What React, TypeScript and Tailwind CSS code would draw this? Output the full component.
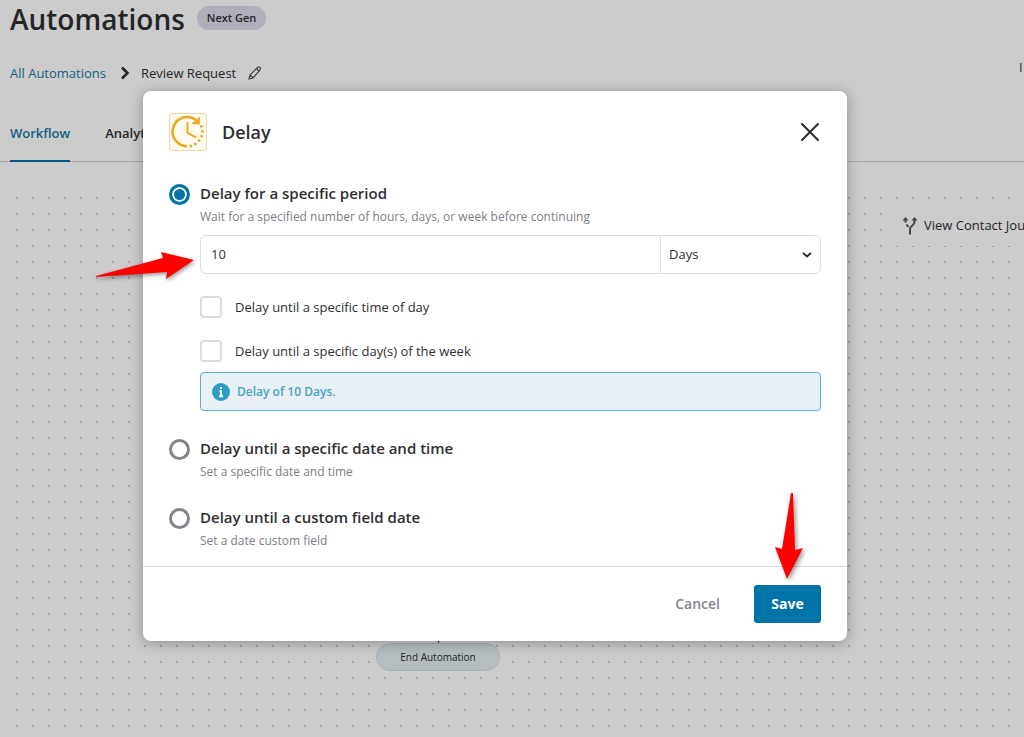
import { useState } from "react";

type Mode = "period" | "datetime" | "custom";

const options: { id: Mode; title: string; description: string }[] = [
  {
    id: "period",
    title: "Delay for a specific period",
    description: "Wait for a specified number of hours, days, or week before continuing",
  },
  {
    id: "datetime",
    title: "Delay until a specific date and time",
    description: "Set a specific date and time",
  },
  {
    id: "custom",
    title: "Delay until a custom field date",
    description: "Set a date custom field",
  },
];

const checks = [
  { id: "time-of-day", label: "Delay until a specific time of day" },
  { id: "day-of-week", label: "Delay until a specific day(s) of the week" },
];

function DelayIcon() {
  return (
    <svg viewBox="0 0 38 38" className="size-[38px]" fill="none" stroke="#e6ab24" aria-hidden="true">
      <rect x="0.5" y="0.5" width="37" height="37" rx="2.5" fill="#fffaf0" stroke="#f0d9a8" />
      <path d="M17 33.2A14.6 14.6 0 1 1 27 7" strokeWidth="2.6" strokeLinecap="round" />
      <path d="M30.300 4.500v6.500l-7-.5z" fill="#e6ab24" strokeWidth="1" strokeLinejoin="round" />
      <path d="M18.400 10v9.600l8 4.600" strokeWidth="2" strokeLinecap="round" strokeLinejoin="round" />
      <path
        d="M32.4 13.4v.01M33.4 18.4v.01M32.6 23.2v.01M30 27.6v.01M26.4 31v.01M21.8 33v.01"
        strokeWidth="2.800"
        strokeLinecap="round"
      />
    </svg>
  );
}

function JourneyIcon() {
  return (
    <svg viewBox="0 0 16 20" className="h-5 w-4 shrink-0" fill="none" stroke="#555" aria-hidden="true">
      <path d="M8 18.5V13c0-3 4.5-3.500 4.500-7V4" strokeWidth="2" />
      <path d="M3.500 4v2.500M4.500 8.500l2 2.500" strokeWidth="2" />
      <path d="M3.500 1 6.500 4.500h-6zM12.500 1l3 3.500h-6z" fill="#555" stroke="none" />
    </svg>
  );
}

function DelayDialog() {
  const [mode, setMode] = useState<Mode>("period");
  const [amount, setAmount] = useState("10");
  const [unit, setUnit] = useState("Days");

  return (
    <div
      role="dialog"
      aria-labelledby="dialog-title"
      className="relative w-full max-w-[704px] rounded-lg bg-white shadow-[0_2px_14px_rgba(0,0,0,0.3)]"
    >
      <header className="flex items-center gap-[15px] px-[26px] pt-[22px]">
        <DelayIcon />
        <h2 id="dialog-title" className="text-lg font-semibold">
          Delay
        </h2>
        <button type="button" aria-label="Close" className="ml-auto">
          <svg viewBox="0 0 22 22" className="size-[22px]" stroke="#2b2b2b" strokeWidth="2" strokeLinecap="round">
            <path d="M3 3l16 16M19 3L3 19" />
          </svg>
        </button>
      </header>

      <div className="flex flex-col gap-[21px] px-[26px] pt-[30px] pb-[13px]">
        {options.map((o) => (
          <div key={o.id} className="flex gap-[10px]">
            <input
              type="radio"
              id={o.id}
              name="mode"
              checked={mode === o.id}
              onChange={() => setMode(o.id)}
              className="mt-[3px] size-[21px] shrink-0 appearance-none rounded-full border-[3px] border-[#85858d] checked:border-[#0073a8] checked:bg-[#0073a8] checked:shadow-[inset_0_0_0_2px_#fff]"
            />
            <div className="min-w-0 grow">
              <label htmlFor={o.id} className="block text-[15px] leading-6 font-semibold">
                {o.title}
              </label>
              <p className="text-xs leading-6 text-[#7e7e87]">{o.description}</p>

              {o.id === "period" && (
                <div className="mb-1">
                  <div className="mt-[6px] flex h-[39px] rounded-md border border-[#dedee6] text-[13px]">
                    <input
                      aria-label="Delay amount"
                      value={amount}
                      onChange={(e) => setAmount(e.target.value)}
                      className="min-w-0 grow px-[10px] outline-none"
                    />
                    <div className="relative w-[160px] shrink-0 border-l border-[#dedee6]">
                      <select
                        aria-label="Delay unit"
                        value={unit}
                        onChange={(e) => setUnit(e.target.value)}
                        className="size-full appearance-none px-2 outline-none"
                      >
                        <option>Hours</option>
                        <option>Days</option>
                        <option>Weeks</option>
                      </select>
                      <svg
                        viewBox="0 0 10 6"
                        className="pointer-events-none absolute top-4 right-2 h-[6px] w-[10px]"
                        fill="none"
                        stroke="#2b2b2b"
                        strokeWidth="1.800"
                      >
                        <path d="M1 1l4 3.500L9 1" />
                      </svg>
                    </div>
                  </div>
                  <div className="mt-[22px] flex flex-col gap-[22px]">
                    {checks.map((c) => (
                      <div key={c.id} className="flex items-center gap-[13px]">
                        <input
                          type="checkbox"
                          id={c.id}
                          className="size-[22px] shrink-0 appearance-none rounded-sm border-2 border-[#dcdce2] checked:bg-[#0073a8]"
                        />
                        <label htmlFor={c.id} className="text-[13px] leading-[22px]">
                          {c.label}
                        </label>
                      </div>
                    ))}
                  </div>
                  <div className="mt-[10px] flex h-[39px] items-center gap-[7px] rounded-sm border border-[#5eafc9] bg-[#e8f1f5] px-[11px] text-xs font-semibold text-[#4ba3c7]">
                    <svg viewBox="0 0 18 18" className="size-[18px]" aria-hidden="true">
                      <circle cx="9" cy="9" r="9" fill="#2f9cc8" />
                      <path d="M9 4v2M7.500 8H9v5M7 13.200h4" stroke="#fff" strokeWidth="2" fill="none" />
                    </svg>
                    Delay of {amount} {unit}.
                  </div>
                </div>
              )}
            </div>
          </div>
        ))}
      </div>

      <footer className="flex items-center justify-end gap-4 border-t border-[#dddde0] px-[26px] py-[18px] text-sm font-semibold">
        <button type="button" className="px-[18px] text-[#85858d]">
          Cancel
        </button>
        <button type="button" className="h-[38px] w-[67px] rounded-[3px] bg-[#0073a8] font-bold text-white">
          Save
        </button>
      </footer>

      {/* pointers to the amount field and the save button */}
      <svg
        viewBox="0 0 100 30"
        className="absolute top-[160px] left-[-48px] h-[30px] w-[100px] drop-shadow-[1px_2px_2px_rgba(0,0,0,0.4)]"
        fill="#f00"
      >
        <path d="M1 25L68 7L66 1L99 9L71 28L72 21L1 26z" />
      </svg>
      <svg
        viewBox="0 0 30 88"
        className="absolute right-[44px] bottom-[61px] h-[88px] w-[30px] drop-shadow-[2px_2px_2px_rgba(0,0,0,0.4)]"
        fill="#f00"
      >
        <path d="M18 1h2l2 57l8-2l-16 31L2 55l7 2z" />
      </svg>
    </div>
  );
}

export default function App() {
  return (
    <div className="relative flex min-h-screen flex-col overflow-hidden bg-white font-['Open_Sans','Noto_Sans',sans-serif] text-[#2f2f33]">
      <header className="px-[10px]">
        <div className="flex items-center gap-3">
          <h1 className="text-[28px] leading-[39px] font-semibold">Automations</h1>
          <span className="-mt-1 rounded-full bg-[#dddaea] px-[10px] text-[11px] leading-6 font-semibold">Next Gen</span>
        </div>
        <div className="mt-[23px] flex items-center text-[13px] leading-[22px]">
          <a href="#automations" className="text-[#1a7a9e]">
            All Automations
          </a>
          <svg viewBox="0 0 10 14" className="mr-[11px] ml-[14px] h-[14px] w-[10px]" fill="none" stroke="#2b2b2b" strokeWidth="2.500">
            <path d="M2 1.500L7.500 7L2 12.500" />
          </svg>
          <span>Review Request</span>
          <button type="button" aria-label="Rename" className="ml-3">
            <svg viewBox="0 0 14 14" className="size-[14px]" fill="none" stroke="#555" strokeWidth="1.200">
              <path d="M1 13l1-4L9.700 1.300q1.200-.8 2.200.2t.3 2.200L5 12zM8.500 2.500l3 3M2 9l3 3" />
            </svg>
          </button>
          <span className="-mt-3 -mr-[10px] ml-auto w-[5px]">I</span>
        </div>
      </header>

      <nav className="mt-[39px] flex gap-[35px] border-b border-[#cfcfcf] px-[10px] text-[13px] font-semibold">
        <a href="#workflow" className="-mb-px border-b-2 border-[#0073a8] pb-[16px] leading-[21px] text-[#1a7a9e]">
          Workflow
        </a>
        <a href="#analytics" className="leading-[21px]">
          Analytics
        </a>
      </nav>

      <main className="mt-7 ml-[9px] flex grow flex-col bg-[radial-gradient(circle,#cbcbcb_1px,transparent_1px)] bg-[length:16px_16px]">
        <button
          type="button"
          className="mt-4 ml-auto flex h-10 w-[134px] items-center gap-[6px] rounded-l-lg bg-white pl-3 text-[13px] whitespace-nowrap"
        >
          <JourneyIcon />
          View Contact Journey
        </button>
        <div className="mt-auto mb-[66px] flex justify-center pr-[157px]">
          <div className="flex flex-col items-center">
            <div className="h-3 w-px bg-[#444]" />
            <div className="w-[124px] rounded-full border border-[#d3dde2] bg-[#e4edf1] text-center text-[10px] leading-[26px]">
              End Automation
            </div>
          </div>
        </div>
      </main>

      <div className="absolute inset-0 flex items-start justify-center bg-black/20 pt-[91px] pr-[34px]">
        <DelayDialog />
      </div>
    </div>
  );
}
